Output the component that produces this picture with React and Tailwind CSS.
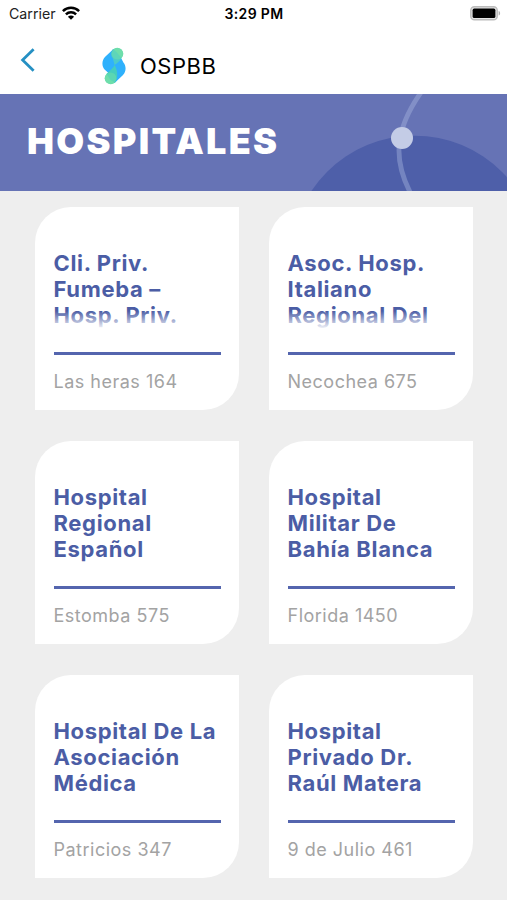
import React from 'react';

const hospitals = [
  { name: 'Cli. Priv. Fumeba – Hosp. Priv.', address: 'Las heras 164', clipped: true },
  { name: 'Asoc. Hosp. Italiano Regional Del', address: 'Necochea 675', clipped: true },
  { name: 'Hospital Regional Español', address: 'Estomba 575' },
  { name: 'Hospital Militar De Bahía Blanca', address: 'Florida 1450' },
  { name: 'Hospital De La Asociación Médica', address: 'Patricios 347' },
  { name: 'Hospital Privado Dr. Raúl Matera', address: '9 de Julio 461' },
];

const WifiIcon = () => (
  <svg className="w-[18px] h-[14px]" viewBox="0 0 18 14" fill="none" stroke="#000" strokeWidth="2.5">
    <path d="M0.9 5.1C5.4 0.7 12.6 0.7 17.1 5.1" />
    <path d="M3.9 8.4C6.8 5.6 11.2 5.6 14.1 8.4" />
    <path d="M9 13.8L5.9 10.7C7.6 9.1 10.4 9.1 12.1 10.7Z" fill="#000" stroke="none" />
  </svg>
);

const BatteryIcon = () => (
  <svg className="w-[31px] h-[15px]" viewBox="0 0 31 15">
    <rect x="0.8" y="0.8" width="26.4" height="13" rx="3.6" fill="#e6e6e6" stroke="#bcbcbc" strokeWidth="1.5" />
    <rect x="2.6" y="2.6" width="22.8" height="9.4" rx="1.6" fill="#000" />
    <path d="M28.6 5C30.6 5.5 30.6 9.1 28.6 9.6Z" fill="#b0b0b0" />
  </svg>
);

const Logo = () => (
  <svg className="w-6 h-[38px]" viewBox="0 0 24 38">
    <circle cx="15.2" cy="6.8" r="6.1" fill="#6adcae" />
    <circle cx="8.8" cy="31.2" r="6.1" fill="#6adcae" />
    <path d="M11.2 2.2L3.2 9.8C-0.4 13.4 -0.4 19 2.6 22.6L6.4 26L12.8 35.8L20.8 28.2C24.4 24.6 24.4 19 21.4 15.4L19.6 12Z" fill="#2fb1fc" />
    <path d="M11.2 2.2C8.6 4.6 8.4 8.6 10.8 11.2L12.6 18C16 15.4 18.6 13.4 19.6 11L14.4 5Z" fill="#4bcacb" />
    <path d="M12.6 18C11.6 20.8 8.6 22.8 4.5 26.9L8.6 33L12.8 35.8C16.4 31 15.8 23.6 12.6 18Z" fill="#45cebd" />
    <circle cx="15.4" cy="6.8" r="5.8" fill="#72dfa8" opacity=".5" />
    <circle cx="8.6" cy="31.2" r="5.8" fill="#72dfa8" opacity=".5" />
  </svg>
);

const HospitalCard = ({ name, address, clipped }) => (
  <div className="h-[203px] bg-white rounded-tl-[36px] rounded-br-[36px] pt-[43px] pl-[18.5px] pr-[18.5px]">
    <div className="relative h-[78px]">
      <h2 className="w-[166px] text-[22px] leading-[26px] font-[650] tracking-[0.65px] text-[#4b5da5]">{name}</h2>
      {clipped && (
        <div className="absolute inset-x-0 -bottom-2 h-[25px] bg-linear-to-b from-white/0 to-white to-75%"></div>
      )}
    </div>
    <div className="mt-6 h-[3px] bg-[#5465ae]"></div>
    <p className="mt-[14px] text-[18px] leading-[26px] tracking-[0.5px] text-[#a3a3a3]">{address}</p>
  </div>
);

const App = () => {
  return (
    <div className="h-[900px] w-[507px] overflow-hidden flex flex-col bg-[#eeeeee] font-['Inter',sans-serif]">
      {/* STATUS BAR */}
      <div className="h-[26px] shrink-0 grid grid-cols-3 items-center bg-white pl-[9px] pr-[6px] text-black">
        <div className="flex items-center gap-[6px] pt-px">
          <span className="text-[14.2px] text-[#222]">Carrier</span>
          <WifiIcon />
        </div>
        <span className="text-center text-[14px] font-semibold tracking-[0.35px] mr-[2px]">3:29 PM</span>
        <div className="flex justify-end">
          <BatteryIcon />
        </div>
      </div>

      {/* NAV */}
      <header className="h-[68px] shrink-0 flex items-center bg-white pl-5">
        <svg className="w-4 h-6" viewBox="0 0 16 24" fill="none" stroke="#2590c3" strokeWidth="2.8">
          <path d="M13.6 1.2L2.6 12L13.6 22.8" />
        </svg>
        <div className="ml-[66px] mt-[11px] flex items-center gap-[14px]">
          <Logo />
          <span className="pt-[2px] text-[22px] tracking-[0.5px] text-black">OSPBB</span>
        </div>
      </header>

      {/* BANNER */}
      <div className="relative h-[97px] shrink-0 flex items-center bg-[#6673b5] pl-[27px] pb-[4px]">
        <svg className="absolute right-0 top-0 w-[207px] h-[97px]" viewBox="300 94 207 97">
          <circle cx="414.5" cy="259.5" r="123.8" fill="#4e5fa9" />
          <path d="M422 91C394 130 393 160 411 194" fill="none" stroke="#a9b7e0" strokeOpacity="0.42" strokeWidth="4.8" />
          <circle cx="402" cy="138" r="11" fill="#c4cce6" />
        </svg>
        <h1 className="relative text-[36px] leading-none font-black tracking-[2.3px] text-white">HOSPITALES</h1>
      </div>

      {/* LIST */}
      <main className="grid grid-cols-2 gap-x-[30px] gap-y-[31px] pt-4 pl-[35px] pr-[34px]">
        {hospitals.map((h) => (
          <HospitalCard key={h.name} {...h} />
        ))}
      </main>
    </div>
  );
};

export default App;
